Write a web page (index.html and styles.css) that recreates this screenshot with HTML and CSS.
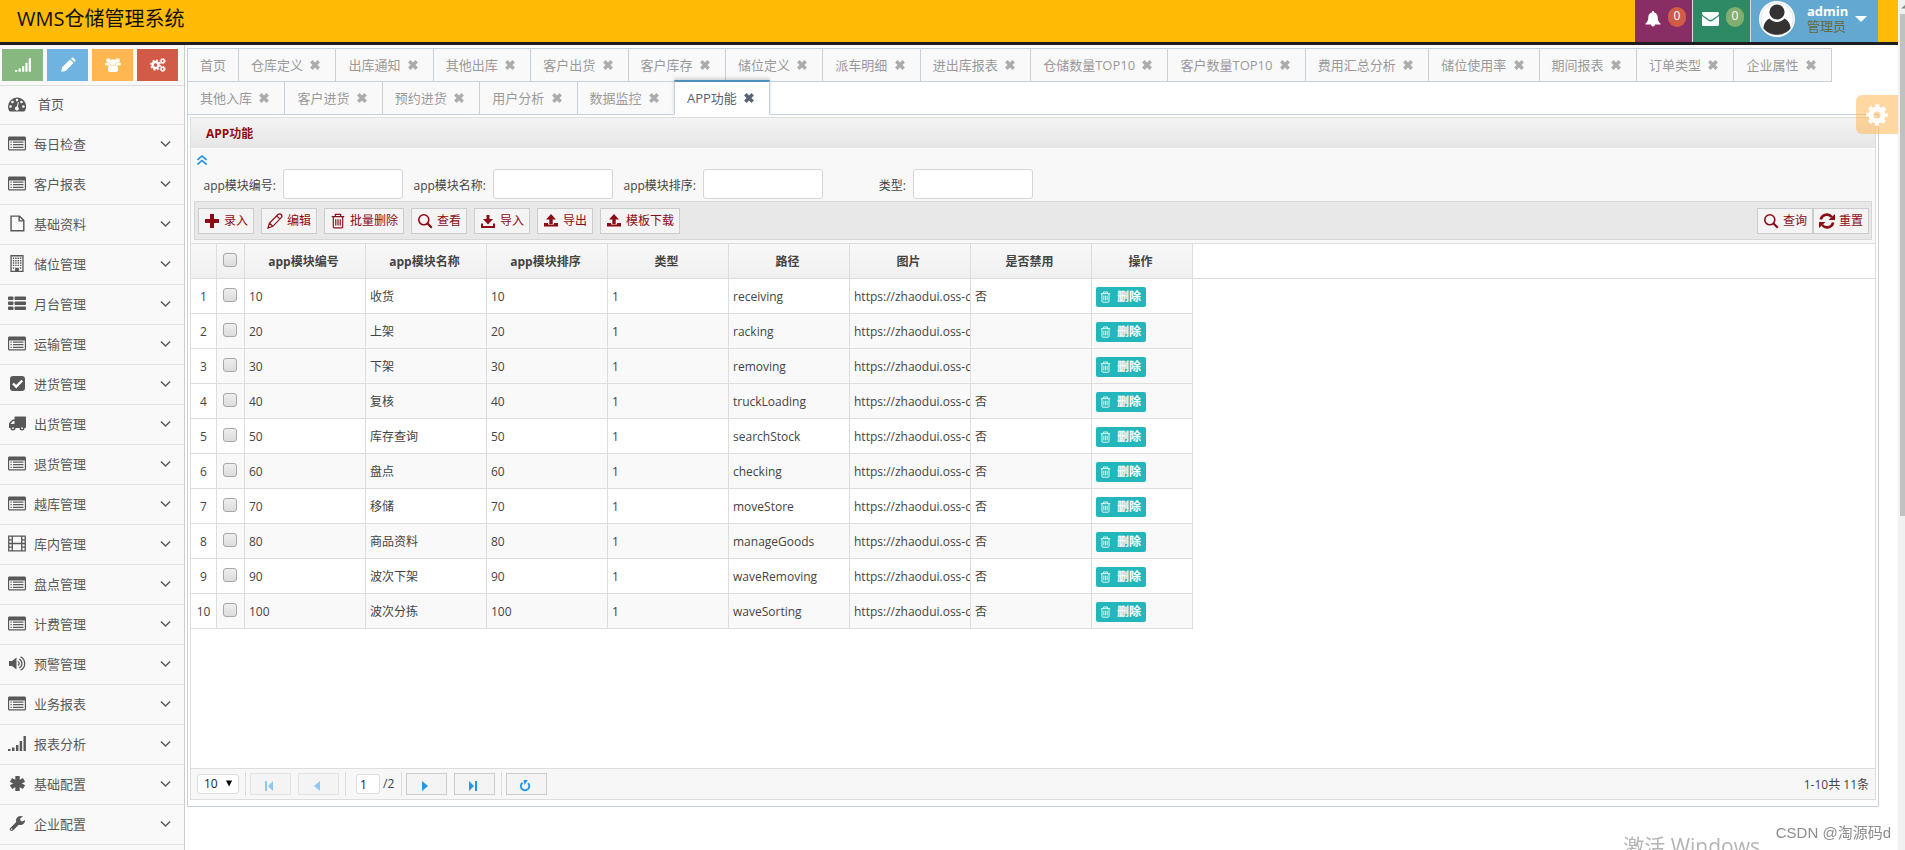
FILE: index.html
```html
<!DOCTYPE html>
<html lang="zh-CN">
<head>
<meta charset="utf-8">
<title>WMS仓储管理系统</title>
<link rel="stylesheet" href="styles.css">
</head>
<body>
<svg class="defs" aria-hidden="true">
  <symbol id="i-dash" viewBox="0 0 18 16"><path fill="currentColor" fill-rule="evenodd" d="M9 1a9 9 0 0 0-9 9c0 1.700.4 3.200 1.200 4.600.2.300.5.400.8.400h14c.3 0 .6-.1.800-.4A9 9 0 0 0 9 1zM2.600 11.300a1.300 1.300 0 1 1 0-2.600 1.300 1.300 0 0 1 0 2.600zM4.500 6.800a1.300 1.300 0 1 1 0-2.600 1.300 1.300 0 0 1 0 2.600zM9 4.900a1.300 1.300 0 1 1 0-2.600 1.300 1.300 0 0 1 0 2.600zm1.800 7.500a2 2 0 1 1-2-2.400l1-3.900c.1-.8 1.200-.5 1 .2l-1 3.900c.7.500 1.100 1.300 1 2.200zM13.500 6.800a1.300 1.300 0 1 1 0-2.600 1.300 1.300 0 0 1 0 2.600zm1.900 4.500a1.300 1.300 0 1 1 0-2.600 1.300 1.300 0 0 1 0 2.600z"/></symbol>
  <symbol id="i-list" viewBox="0 0 18 16"><path fill="currentColor" fill-rule="evenodd" d="M1.500 1h15C17.300 1 18 1.700 18 2.500v11c0 .8-.7 1.500-1.500 1.500h-15C.7 15 0 14.300 0 13.500v-11C0 1.700.7 1 1.500 1zM1.200 5v8.200c0 .3.300.6.600.6h14.400c.3 0 .6-.3.600-.6V5z"/><path fill="currentColor" d="M2.500 6h1.200v1.200H2.500zM2.500 8.600h1.200v1.200H2.500zM2.500 11.200h1.200v1.200H2.500zM5 6h10.500v1.200H5zM5 8.600h10.500v1.200H5zM5 11.200h10.500v1.200H5z"/></symbol>
  <symbol id="i-file" viewBox="0 0 18 18"><path fill="none" stroke="currentColor" stroke-width="1.500" d="M2.700 1.200h9l4.500 4.500v11H2.700zM11.300 1.200v5h5"/></symbol>
  <symbol id="i-building" viewBox="0 0 18 18"><path fill="none" stroke="currentColor" stroke-width="1.400" d="M2.700.8h12.600v16.500H2.700z"/><path stroke="currentColor" stroke-width="1.500" stroke-dasharray="1.500 1" d="M4.600 3.500h9M4.600 6h9M4.600 8.500h9M4.600 11h9"/><path fill="currentColor" d="M4.600 13h1.500v1.500H4.600zM12 13h1.500v1.500H12zM7 13.500h4V17H7z"/></symbol>
  <symbol id="i-thlist" viewBox="0 0 18 16"><path fill="currentColor" d="M1 1h3.500c.5 0 1 .5 1 1v1.500c0 .5-.5 1-1 1H1c-.5 0-1-.5-1-1V2c0-.5.5-1 1-1zM7.500 1H17c.5 0 1 .5 1 1v1.500c0 .5-.5 1-1 1H7.500c-.5 0-1-.5-1-1V2c0-.5.500-1 1-1zM1 6h3.500c.5 0 1 .5 1 1v1.500c0 .5-.5 1-1 1H1c-.5 0-1-.5-1-1V7c0-.5.5-1 1-1zM7.500 6H17c.5 0 1 .5 1 1v1.500c0 .5-.5 1-1 1H7.500c-.5 0-1-.5-1-1V7c0-.5.500-1 1-1zM1 11h3.500c.5 0 1 .5 1 1v1.500c0 .5-.5 1-1 1H1c-.5 0-1-.5-1-1V12c0-.5.5-1 1-1zM7.500 11H17c.5 0 1 .5 1 1v1.500c0 .5-.5 1-1 1H7.500c-.5 0-1-.5-1-1V12c0-.5.500-1 1-1z"/></symbol>
  <symbol id="i-check" viewBox="0 0 18 16"><rect x="2" y=".5" width="15" height="15" rx="3" fill="currentColor"/><path fill="none" stroke="#fff" stroke-width="2.400" d="M5 8l3.200 3.200 6-6.200"/></symbol>
  <symbol id="i-truck" viewBox="0 0 18 16"><path fill="currentColor" fill-rule="evenodd" d="M7.500 1H17c.6 0 1 .4 1 1v9.500c0 .6-.4 1-1 1h-.5a2.500 2.500 0 0 1-5 0h-4a2.500 2.500 0 0 1-5 0H1V8.500l.4-1.300L4 4.500 5 4h1.500V2c0-.6.400-1 1-1zM2.500 8.500h4v-3H5z"/><circle cx="5" cy="12.700" r="1.900" fill="currentColor"/><circle cx="5" cy="12.700" r=".9" fill="#f9f9f9"/><circle cx="14" cy="12.700" r="1.900" fill="currentColor"/><circle cx="14" cy="12.700" r=".9" fill="#f9f9f9"/></symbol>
  <symbol id="i-film" viewBox="0 0 19 17"><path fill="none" stroke="currentColor" stroke-width="1.400" d="M.8.800h17.400v15.400H.8zM4.500.800v15.400M14.500.800v15.400M4.500 8.500h10M.8 4.600h3.700M.8 8.500h3.700M.8 12.400h3.700M14.500 4.600h3.700M14.500 8.500h3.700M14.500 12.400h3.700"/></symbol>
  <symbol id="i-volume" viewBox="0 0 18 16"><path fill="currentColor" d="M1 5.500h3L8.500 2v12L4 10.500H1z"/><path fill="none" stroke="currentColor" stroke-width="1.300" d="M10 6a2.300 2.300 0 0 1 0 4M11.300 3.600a5 5 0 0 1 0 8.800M12.600 1.200a7.700 7.700 0 0 1 0 13.600"/></symbol>
  <symbol id="i-signal" viewBox="0 0 18 16"><path fill="currentColor" d="M0 13.500h2.500v2H0zM4 12h2.500v3.500H4zM8 9.500h2.400v6H8zM11.700 5.500h2.400v10h-2.400zM15.500.500h2.400v15h-2.400z"/></symbol>
  <symbol id="i-asterisk" viewBox="0 0 18 16"><path fill="none" stroke="currentColor" stroke-width="4.400" stroke-linejoin="round" d="M9.500.5v15M3 4.300l13 7.400M3 11.700l13-7.400"/></symbol>
  <symbol id="i-wrench" viewBox="0 0 18 18"><path fill="currentColor" fill-rule="evenodd" d="M12.800 1c1 0 1.900.2 2.700.7L12.500 3.500v2.300l2 1.200 3-1.800c.2 3-2 5.300-4.800 5.300-.6 0-1.200-.1-1.700-.3l-6.300 6.300c-.8.700-2 .7-2.800 0-.8-.8-.8-2 0-2.800L8.200 7.400C7.200 4.200 9.500 1 12.800 1zM3.300 14.200a.8.800 0 1 0 0 1.600.8.800 0 0 0 0-1.600z"/></symbol>
  <symbol id="i-pencil" viewBox="0 0 16 16"><path fill="currentColor" d="M2 10.500L10 2.500l3.500 3.500-8 8-4.200.7zM11 1.700l.9-.9c.5-.5 1-.5 1.500 0l1.900 1.900c.5.500.5 1 0 1.500l-.9.900z"/></symbol>
  <symbol id="i-users" viewBox="0 0 18 16"><g fill="currentColor"><circle cx="3.800" cy="3" r="2.500"/><circle cx="14.200" cy="3" r="2.500"/><circle cx="9" cy="5" r="3.400"/><path d="M1.500 5.500h3.700c.1 1.500.7 2.500 1.500 3.200H3c-2 0-3-.7-3-1.800 0-.9.700-1.400 1.500-1.400zM16.500 5.500h-3.700c-.1 1.500-.7 2.500-1.500 3.200H15c2 0 3-.7 3-1.800 0-.9-.7-1.400-1.500-1.400zM5 8.500h8c1.200.8 1.800 2.500 1.800 4.800 0 1.500-1 2.500-2.500 2.500H5.700c-1.500 0-2.500-1-2.500-2.500 0-2.300.6-4 1.800-4.800z"/></g></symbol>
  <symbol id="i-cogs" viewBox="0 0 18 16"><g fill="none" stroke="currentColor"><circle cx="6.200" cy="8" r="3.400" stroke-width="2.600"/><circle cx="6.200" cy="8" r="5.300" stroke-width="1.600" stroke-dasharray="2.200 1.960"/><circle cx="14.300" cy="3.600" r="1.900" stroke-width="1.600"/><circle cx="14.300" cy="3.600" r="2.900" stroke-width="1" stroke-dasharray="1.300 .980"/><circle cx="14.300" cy="12.400" r="1.900" stroke-width="1.600"/><circle cx="14.300" cy="12.400" r="2.900" stroke-width="1" stroke-dasharray="1.300 .980"/></g></symbol>
  <symbol id="i-cog" viewBox="0 0 22 22"><g fill="none" stroke="currentColor"><circle cx="11" cy="11" r="6" stroke-width="5"/><circle cx="11" cy="11" r="9.200" stroke-width="3.200" stroke-dasharray="4 3.225" stroke-dashoffset="2"/></g></symbol>
  <symbol id="i-down" viewBox="0 0 12 8"><path fill="none" stroke="currentColor" stroke-width="1.600" d="M1 1.200l5 5 5-5"/></symbol>
  <symbol id="i-x" viewBox="0 0 10 10"><path fill="none" stroke="currentColor" stroke-width="3.400" d="M1.300 1.300l7.400 7.400M8.700 1.300L1.300 8.700"/></symbol>
  <symbol id="i-bell" viewBox="0 0 16 16"><path fill="currentColor" d="M8 0c.7 0 1 .4 1 1v.5c2.400.5 3.700 2.300 3.700 4.800 0 3.200 1 5 2.800 6.200v1H10a2 2 0 0 1-4 0H.5v-1c1.800-1.200 2.800-3 2.800-6.200 0-2.500 1.300-4.300 3.700-4.800V1c0-.6.300-1 1-1z"/></symbol>
  <symbol id="i-mail" viewBox="0 0 17 14"><path fill="currentColor" d="M1.500 0h14c.8 0 1.500.6 1.500 1.300 0 .9-.7 1.800-1.500 2.400L10 7.600c-.9.600-2.100.6-3 0L1.500 3.700C.7 3.100 0 2.200 0 1.300 0 .6.700 0 1.500 0zM0 4l6.500 4.700c1.200.9 2.800.9 4 0L17 4v8.500c0 .8-.7 1.500-1.500 1.500h-14C.7 14 0 13.300 0 12.500z"/></symbol>
  <symbol id="i-plus" viewBox="0 0 16 16"><path fill="currentColor" d="M6 1h4v5h5v4h-5v5H6v-5H1V6h5z"/></symbol>
  <symbol id="i-edit" viewBox="0 0 16 16"><path fill="none" stroke="currentColor" stroke-width="1.200" d="M1 15l1.500-5L11 1.500c1-1 2.500-.8 3.200 0s1 2.200 0 3.200L5.800 13.300zM9.700 2.800l3.300 3.300M2.500 10l3.300 3.300"/></symbol>
  <symbol id="i-trash" viewBox="0 0 16 18"><path fill="none" stroke="currentColor" stroke-width="1.300" d="M1 4h14M5 4V1.500h6V4M2.700 4v11.500c0 .8.500 1.300 1.300 1.300h8c.8 0 1.300-.5 1.300-1.300V4M5.500 7v7M8 7v7M10.500 7v7"/></symbol>
  <symbol id="i-search" viewBox="0 0 16 16"><circle cx="6.800" cy="6.800" r="5" fill="none" stroke="currentColor" stroke-width="1.600"/><path stroke="currentColor" stroke-width="2.200" d="M10.300 10.300l4.500 4.500"/></symbol>
  <symbol id="i-import" viewBox="0 0 16 16"><path fill="currentColor" d="M6.500 2h3v4H13L8 11.500 3 6h3.500zM1 10.500h2V13h10v-2.500h2V15H1z"/></symbol>
  <symbol id="i-export" viewBox="0 0 16 16"><path fill="currentColor" d="M8 1l5 5.500H9.700V11H6.300V6.500H3zM1 10h4v1.500h6V10h4v3.500H1z"/></symbol>
  <symbol id="i-refresh" viewBox="0 0 16 16"><path fill="none" stroke="currentColor" stroke-width="2.600" d="M1.800 6.500a6.300 6.300 0 0 1 11-2.500M14.200 9.500a6.300 6.300 0 0 1-11 2.500"/><path fill="currentColor" d="M16 1v6h-6.500zM0 15V9h6.500z"/></symbol>
  <symbol id="i-up2" viewBox="0 0 10 10"><path fill="none" stroke="currentColor" stroke-width="1.600" d="M.5 5L5 1l4.500 4M.5 9.500L5 5.500l4.500 4"/></symbol>
  <symbol id="i-first" viewBox="0 0 10 10"><path fill="currentColor" d="M1 0h2v10H1zM9 0v10L4 5z"/></symbol>
  <symbol id="i-prev" viewBox="0 0 10 10"><path fill="currentColor" d="M8 0v10L2 5z"/></symbol>
  <symbol id="i-next" viewBox="0 0 10 10"><path fill="currentColor" d="M2 0v10l6-5z"/></symbol>
  <symbol id="i-last" viewBox="0 0 10 10"><path fill="currentColor" d="M7 0h2v10H7zM1 0v10l5-5z"/></symbol>
  <symbol id="i-reload" viewBox="0 0 12 12"><path fill="none" stroke="currentColor" stroke-width="1.900" d="M3.500 2.800a4.200 4.200 0 1 0 5.500.3"/><path fill="currentColor" d="M4.500 0h4.300L5.500 5z"/></symbol>
</svg>

<header class="topbar">
  <h1 class="brand">WMS仓储管理系统</h1>
  <nav class="user-nav">
    <a href="#" class="nav-cell purple" aria-label="通知"><svg class="ic16"><use href="#i-bell"/></svg><span class="badge red">0</span></a>
    <a href="#" class="nav-cell green" aria-label="消息"><svg class="mail"><use href="#i-mail"/></svg><span class="badge lime">0</span></a>
    <a href="#" class="nav-cell blue">
      <svg class="avatar" viewBox="0 0 36 36"><circle cx="18" cy="18" r="18" fill="#fff"/><circle cx="18" cy="18" r="16.300" fill="none" stroke="#dfe5e8"/><circle cx="18" cy="11" r="7.600" fill="#333"/><path fill="#333" d="M10.500 17.500c3.500 4.600 11.500 4.600 15 0 3.500 1.500 6 5.500 6 10-3 3.800-8 6.300-13.500 6.300S7.500 31.300 4.500 27.500c0-4.500 2.500-8.500 6-10z"/></svg>
      <span class="who"><strong>admin</strong><span>管理员</span></span>
      <svg class="caret" viewBox="0 0 12 6"><path fill="#fff" d="M0 0h12L6 6z"/></svg>
    </a>
  </nav>
</header>

<div class="layout">
  <aside class="sidebar">
    <div class="shortcuts">
      <button class="sc sc-green" aria-label="统计"><svg class="ic16"><use href="#i-signal"/></svg></button>
      <button class="sc sc-blue" aria-label="编辑"><svg class="ic16"><use href="#i-pencil"/></svg></button>
      <button class="sc sc-orange" aria-label="用户"><svg class="ic16"><use href="#i-users"/></svg></button>
      <button class="sc sc-red" aria-label="设置"><svg class="ic16"><use href="#i-cogs"/></svg></button>
    </div>
    <ul class="menu">
      <li><a href="#" class="home"><svg class="mi"><use href="#i-dash"/></svg><span>首页</span></a></li>
      <li><a href="#"><svg class="mi"><use href="#i-list"/></svg><span>每日检查</span><svg class="dn"><use href="#i-down"/></svg></a></li>
      <li><a href="#"><svg class="mi"><use href="#i-list"/></svg><span>客户报表</span><svg class="dn"><use href="#i-down"/></svg></a></li>
      <li><a href="#"><svg class="mi"><use href="#i-file"/></svg><span>基础资料</span><svg class="dn"><use href="#i-down"/></svg></a></li>
      <li><a href="#"><svg class="mi"><use href="#i-building"/></svg><span>储位管理</span><svg class="dn"><use href="#i-down"/></svg></a></li>
      <li><a href="#"><svg class="mi"><use href="#i-thlist"/></svg><span>月台管理</span><svg class="dn"><use href="#i-down"/></svg></a></li>
      <li><a href="#"><svg class="mi"><use href="#i-list"/></svg><span>运输管理</span><svg class="dn"><use href="#i-down"/></svg></a></li>
      <li><a href="#"><svg class="mi"><use href="#i-check"/></svg><span>进货管理</span><svg class="dn"><use href="#i-down"/></svg></a></li>
      <li><a href="#"><svg class="mi"><use href="#i-truck"/></svg><span>出货管理</span><svg class="dn"><use href="#i-down"/></svg></a></li>
      <li><a href="#"><svg class="mi"><use href="#i-list"/></svg><span>退货管理</span><svg class="dn"><use href="#i-down"/></svg></a></li>
      <li><a href="#"><svg class="mi"><use href="#i-list"/></svg><span>越库管理</span><svg class="dn"><use href="#i-down"/></svg></a></li>
      <li><a href="#"><svg class="mi"><use href="#i-film"/></svg><span>库内管理</span><svg class="dn"><use href="#i-down"/></svg></a></li>
      <li><a href="#"><svg class="mi"><use href="#i-list"/></svg><span>盘点管理</span><svg class="dn"><use href="#i-down"/></svg></a></li>
      <li><a href="#"><svg class="mi"><use href="#i-list"/></svg><span>计费管理</span><svg class="dn"><use href="#i-down"/></svg></a></li>
      <li><a href="#"><svg class="mi"><use href="#i-volume"/></svg><span>预警管理</span><svg class="dn"><use href="#i-down"/></svg></a></li>
      <li><a href="#"><svg class="mi"><use href="#i-list"/></svg><span>业务报表</span><svg class="dn"><use href="#i-down"/></svg></a></li>
      <li><a href="#"><svg class="mi"><use href="#i-signal"/></svg><span>报表分析</span><svg class="dn"><use href="#i-down"/></svg></a></li>
      <li><a href="#"><svg class="mi"><use href="#i-asterisk"/></svg><span>基础配置</span><svg class="dn"><use href="#i-down"/></svg></a></li>
      <li><a href="#"><svg class="mi"><use href="#i-wrench"/></svg><span>企业配置</span><svg class="dn"><use href="#i-down"/></svg></a></li>
    </ul>
  </aside>

  <main class="content">
    <ul class="tabs">
      <li class="plain"><a href="#">首页</a></li>
      <li><a href="#">仓库定义 </a><button aria-label="关闭"><svg><use href="#i-x"/></svg></button></li>
      <li><a href="#">出库通知 </a><button aria-label="关闭"><svg><use href="#i-x"/></svg></button></li>
      <li><a href="#">其他出库 </a><button aria-label="关闭"><svg><use href="#i-x"/></svg></button></li>
      <li><a href="#">客户出货 </a><button aria-label="关闭"><svg><use href="#i-x"/></svg></button></li>
      <li><a href="#">客户库存 </a><button aria-label="关闭"><svg><use href="#i-x"/></svg></button></li>
      <li><a href="#">储位定义 </a><button aria-label="关闭"><svg><use href="#i-x"/></svg></button></li>
      <li><a href="#">派车明细 </a><button aria-label="关闭"><svg><use href="#i-x"/></svg></button></li>
      <li><a href="#">进出库报表 </a><button aria-label="关闭"><svg><use href="#i-x"/></svg></button></li>
      <li><a href="#">仓储数量TOP10 </a><button aria-label="关闭"><svg><use href="#i-x"/></svg></button></li>
      <li><a href="#">客户数量TOP10 </a><button aria-label="关闭"><svg><use href="#i-x"/></svg></button></li>
      <li><a href="#">费用汇总分析 </a><button aria-label="关闭"><svg><use href="#i-x"/></svg></button></li>
      <li><a href="#">储位使用率 </a><button aria-label="关闭"><svg><use href="#i-x"/></svg></button></li>
      <li><a href="#">期间报表 </a><button aria-label="关闭"><svg><use href="#i-x"/></svg></button></li>
      <li><a href="#">订单类型 </a><button aria-label="关闭"><svg><use href="#i-x"/></svg></button></li>
      <li><a href="#">企业属性 </a><button aria-label="关闭"><svg><use href="#i-x"/></svg></button></li>
      <li><a href="#">其他入库 </a><button aria-label="关闭"><svg><use href="#i-x"/></svg></button></li>
      <li><a href="#">客户进货 </a><button aria-label="关闭"><svg><use href="#i-x"/></svg></button></li>
      <li><a href="#">预约进货 </a><button aria-label="关闭"><svg><use href="#i-x"/></svg></button></li>
      <li><a href="#">用户分析 </a><button aria-label="关闭"><svg><use href="#i-x"/></svg></button></li>
      <li><a href="#">数据监控 </a><button aria-label="关闭"><svg><use href="#i-x"/></svg></button></li>
      <li class="active"><a href="#">APP功能 </a><button aria-label="关闭"><svg><use href="#i-x"/></svg></button></li>
    </ul>
    <div class="tab-pane">
      <section class="panel">
        <h2 class="panel-title">APP功能</h2>
        <div class="search">
          <button class="fold" aria-label="收起"><svg><use href="#i-up2"/></svg></button>
          <form class="fields">
            <label for="f1">app模块编号:</label><input id="f1" type="text">
            <label for="f2">app模块名称:</label><input id="f2" type="text">
            <label for="f3">app模块排序:</label><input id="f3" type="text">
            <label for="f4">类型:</label><input id="f4" type="text">
          </form>
          <div class="toolbar">
            <button class="tb"><svg><use href="#i-plus"/></svg>录入</button>
            <button class="tb"><svg><use href="#i-edit"/></svg>编辑</button>
            <button class="tb"><svg><use href="#i-trash"/></svg>批量删除</button>
            <button class="tb"><svg><use href="#i-search"/></svg>查看</button>
            <button class="tb"><svg><use href="#i-import"/></svg>导入</button>
            <button class="tb"><svg><use href="#i-export"/></svg>导出</button>
            <button class="tb"><svg><use href="#i-export"/></svg>模板下载</button>
            <div class="right"><button class="tb"><svg><use href="#i-search"/></svg>查询</button><button class="tb"><svg><use href="#i-refresh"/></svg>重置</button></div>
          </div>
        </div>
        <div class="grid">
          <table>
            <colgroup><col class="c-num"><col class="c-box"><col><col><col><col><col><col><col><col class="c-op"><col class="c-rest"></colgroup>
            <thead><tr><th></th><th><input type="checkbox" aria-label="全选"></th><th>app模块编号</th><th>app模块名称</th><th>app模块排序</th><th>类型</th><th>路径</th><th>图片</th><th>是否禁用</th><th>操作</th><td class="rest"></td></tr></thead>
            <tbody>
              <tr><td>1</td><td><input type="checkbox" aria-label="选择1"></td><td>10</td><td>收货</td><td>10</td><td>1</td><td>receiving</td><td>https://zhaodui.oss-cn</td><td>否</td><td><button class="del"><svg><use href="#i-trash"/></svg>删除</button></td></tr>
              <tr><td>2</td><td><input type="checkbox" aria-label="选择2"></td><td>20</td><td>上架</td><td>20</td><td>1</td><td>racking</td><td>https://zhaodui.oss-cn</td><td></td><td><button class="del"><svg><use href="#i-trash"/></svg>删除</button></td></tr>
              <tr class="hover"><td>3</td><td><input type="checkbox" aria-label="选择3"></td><td>30</td><td>下架</td><td>30</td><td>1</td><td>removing</td><td>https://zhaodui.oss-cn</td><td></td><td><button class="del"><svg><use href="#i-trash"/></svg>删除</button></td></tr>
              <tr><td>4</td><td><input type="checkbox" aria-label="选择4"></td><td>40</td><td>复核</td><td>40</td><td>1</td><td>truckLoading</td><td>https://zhaodui.oss-cn</td><td>否</td><td><button class="del"><svg><use href="#i-trash"/></svg>删除</button></td></tr>
              <tr><td>5</td><td><input type="checkbox" aria-label="选择5"></td><td>50</td><td>库存查询</td><td>50</td><td>1</td><td>searchStock</td><td>https://zhaodui.oss-cn</td><td>否</td><td><button class="del"><svg><use href="#i-trash"/></svg>删除</button></td></tr>
              <tr><td>6</td><td><input type="checkbox" aria-label="选择6"></td><td>60</td><td>盘点</td><td>60</td><td>1</td><td>checking</td><td>https://zhaodui.oss-cn</td><td>否</td><td><button class="del"><svg><use href="#i-trash"/></svg>删除</button></td></tr>
              <tr><td>7</td><td><input type="checkbox" aria-label="选择7"></td><td>70</td><td>移储</td><td>70</td><td>1</td><td>moveStore</td><td>https://zhaodui.oss-cn</td><td>否</td><td><button class="del"><svg><use href="#i-trash"/></svg>删除</button></td></tr>
              <tr><td>8</td><td><input type="checkbox" aria-label="选择8"></td><td>80</td><td>商品资料</td><td>80</td><td>1</td><td>manageGoods</td><td>https://zhaodui.oss-cn</td><td>否</td><td><button class="del"><svg><use href="#i-trash"/></svg>删除</button></td></tr>
              <tr><td>9</td><td><input type="checkbox" aria-label="选择9"></td><td>90</td><td>波次下架</td><td>90</td><td>1</td><td>waveRemoving</td><td>https://zhaodui.oss-cn</td><td>否</td><td><button class="del"><svg><use href="#i-trash"/></svg>删除</button></td></tr>
              <tr><td>10</td><td><input type="checkbox" aria-label="选择10"></td><td>100</td><td>波次分拣</td><td>100</td><td>1</td><td>waveSorting</td><td>https://zhaodui.oss-cn</td><td>否</td><td><button class="del"><svg><use href="#i-trash"/></svg>删除</button></td></tr>
            </tbody>
          </table>
        </div>
        <footer class="pager">
          <span class="size"><select aria-label="每页条数"><option>10</option><option>20</option></select><svg viewBox="0 0 8 7"><path d="M0 0h7L3.500 7z"/></svg></span>
          <span class="sep"></span>
          <button class="pg" disabled aria-label="首页"><svg><use href="#i-first"/></svg></button>
          <button class="pg" disabled aria-label="上一页"><svg><use href="#i-prev"/></svg></button>
          <span class="sep"></span>
          <label class="page-no"><input type="text" value="1" aria-label="页码">/2</label>
          <span class="sep"></span>
          <button class="pg" aria-label="下一页"><svg><use href="#i-next"/></svg></button>
          <button class="pg" aria-label="末页"><svg><use href="#i-last"/></svg></button>
          <span class="sep"></span>
          <button class="pg" aria-label="刷新"><svg class="reload"><use href="#i-reload"/></svg></button>
          <span class="total">1-10共 11条</span>
        </footer>
      </section>
    </div>
  </main>
</div>

<button class="settings" aria-label="设置"><svg><use href="#i-cog"/></svg></button>
<div class="scrollbar"><svg viewBox="0 0 7 14"><path fill="#8a8a8a" d="M3 8.500h4V5z"/></svg><span></span></div>
<div class="activate">激活 Windows</div>
<div class="credit">CSDN @淘源码d</div>
</body>
</html>
```

FILE: styles.css
```css
* { box-sizing: border-box; }
html { height: 100%; overflow: hidden; }
body {
  margin: 0;
  padding-right: 7px;
  height: 100%;
  overflow: hidden;
  display: flex;
  flex-direction: column;
  background: #fff;
  color: #444;
  font: 12px/16px "Open Sans", "Noto Sans CJK SC", sans-serif;
}
button, input, select { font: inherit; color: inherit; margin: 0; }
button { cursor: pointer; padding: 0; }
a { color: inherit; text-decoration: none; }
ul { list-style: none; margin: 0; padding: 0; }
svg { display: block; flex: none; }
.defs { position: absolute; width: 0; height: 0; }
.ic16 { width: 16px; height: 16px; }

/* top bar */
.topbar {
  flex: none;
  display: flex;
  justify-content: space-between;
  height: 45px;
  background: #ffbb05;
  border-bottom: 3px solid #1f1c22;
  padding: 0 20px 0 17px;
}
.brand { margin: 0; font-size: 20px; font-weight: 400; line-height: 38px; color: #111; }
.user-nav { display: flex; }
.nav-cell { display: flex; align-items: center; color: #fff; border-left: 1px solid #ddd; padding: 0 6px 4px 9px; gap: 7px; }
.purple { background: #892e65; border-left-color: #892e65; }
.green { background: #2e8965; }
.blue { background: #62a8d1; padding: 0 11px 4px 8px; gap: 0; }
.mail { width: 17px; height: 14px; }
.badge { width: 18px; height: 20px; margin-bottom: 4px; border-radius: 9px; text-align: center; line-height: 18px; font-size: 12px; }
.red { background: #d15b47; }
.lime { background: #82af6f; }
.avatar { width: 36px; height: 36px; }
.who { display: flex; flex-direction: column; font-size: 13px; line-height: 15px; width: 39px; margin-left: 12px; }
.who span { color: #6b6a3d; }
.caret { width: 12px; height: 6px; margin-left: 9px; }

/* sidebar */
.layout { flex: 1; display: flex; min-height: 0; }
.sidebar { flex: none; width: 185px; background: #f9f9f9; border-right: 1px solid #ccc; }
.shortcuts { display: flex; gap: 4px; padding: 4px 6px 4px 2px; height: 41px; border-bottom: 1px solid #ddd; }
.sc { flex: 1; height: 32px; border: 0; color: #fff; display: flex; align-items: center; justify-content: center; }
.sc-green { background: #87b87f; }
.sc-blue { background: #6fb3e0; }
.sc-orange { background: #ffb752; }
.sc-red { background: #d15b47; }
.menu a {
  display: flex;
  align-items: center;
  height: 40px;
  padding: 0 13px 2px 8px;
  border-bottom: 1px solid #e5e5e5;
  font-size: 13px;
  color: #585858;
}
.menu .home { height: 39px; }
.menu .home span { margin-left: 12px; }
.mi { width: 18px; height: 17px; }
.menu span { flex: 1; margin-left: 8px; }
.dn { width: 11px; height: 8px; }

/* tabs */
.content { flex: 1; min-width: 0; padding: 3px 19px 0 2px; }
.tabs { display: flex; flex-wrap: wrap; padding-left: 1px; }
.tabs li {
  display: flex;
  align-items: center;
  height: 34px;
  margin: 0 0 -1px -1px;
  padding: 0 15px 0 12px;
  border: 1px solid #c5d0dc;
  background: #f9f9f9;
  color: #999;
  font-size: 13px;
  white-space: pre;
}
.tabs .plain { padding-right: 12px; }
.tabs li button { border: 0; background: none; margin-left: 4px; opacity: .8; }
.tabs li svg { width: 10px; height: 10px; }
.tabs .active { height: 35px; margin-top: -1px; background: #fff; color: #576373; border-top: 2px solid #4c8fbd; border-bottom-color: #fff; box-shadow: 0 -2px 3px rgba(0, 0, 0, .15); z-index: 1; }
.tabs .active button { opacity: 1; }
.tab-pane { border: 1px solid #c5d0dc; padding: 2px 2px 6px; }

/* panel */
.panel { border: 1px solid #ddd; display: flex; flex-direction: column; }
.panel-title {
  margin: 0;
  height: 31px;
  padding: 1px 15px 0;
  line-height: 30px;
  font-size: 12px;
  color: #8d0b14;
  background: linear-gradient(#f4f4f4, #e6e6e6);
  border-bottom: 1px solid #fff;
}
.search { background: #f8f8f8; padding: 6px 3px 3px; }
.fold { display: block; margin-left: 3px; border: 0; background: none; color: #1e8fe1; }
.fold svg { width: 10px; height: 10px; }
.fields { display: grid; grid-template-columns: 73px 120px repeat(3, 76px 120px); column-gap: 7px; align-items: center; padding: 4px 0 2px 9px; }
.fields label { padding-top: 4px; text-align: right; white-space: nowrap; }
.fields input { width: 120px; height: 30px; border: 1px solid #d5d5d5; border-radius: 3px; background: #fff; padding: 0 6px; }
.toolbar { display: flex; align-items: center; gap: 7px; height: 39px; padding: 0 2px 0 3px; background: #e8e8e8; border: 1px solid #d6d6d6; }
.tb {
  display: flex;
  align-items: center;
  gap: 4px;
  height: 26px;
  padding: 1px 5px 0;
  border: 1px solid #ccc;
  background: #f4f4f4;
  color: #8d0b14;
  white-space: nowrap;
}
.tb svg { width: 16px; height: 16px; }
.right { display: flex; margin-left: auto; }

/* table */
.grid { border-top: 1px solid #ddd; height: 525px; overflow: hidden; }
table { width: 100%; table-layout: fixed; border-collapse: separate; border-spacing: 0; }
col { width: 121px; }
.c-num { width: 26px; }
.c-box { width: 28px; }
.c-op { width: 101px; }
.c-rest { width: auto; }
th, td { height: 35px; padding: 1px 4px 0; border-right: 1px solid #ddd; border-bottom: 1px solid #ddd; overflow: hidden; white-space: nowrap; text-align: left; }
th { text-align: center; padding: 1px 3px 0 0; background: linear-gradient(#f8f8f8, #f0f0f0); }
td:first-child { text-align: center; padding: 1px 0 0; }
td:nth-child(2), th:nth-child(2) { padding: 0 1px 0 0; }
thead .rest { border-right: 0; }
tbody tr:nth-child(even), tbody .hover { background: #f9f9f9; }
tbody td:first-child { background: #fff; }
input[type="checkbox"] {
  appearance: none;
  display: block;
  width: 14px;
  height: 14px;
  margin: -3px auto 0;
  border: 1px solid #a8a8a8;
  border-radius: 3px;
  background: linear-gradient(#eee, #dcdcdc);
}
.del {
  display: flex;
  align-items: center;
  gap: 6px;
  height: 20px;
  padding: 0 5px 0 4px;
  border: 0;
  border-radius: 2px;
  background: #23b7bb;
  color: #fff;
  font-weight: 700;
}
.del svg { width: 11px; height: 12px; }

/* pager */
.pager { display: flex; align-items: center; gap: 4px; height: 31px; padding: 0 6px; background: #f7f7f7; border-top: 1px solid #ddd; }
.size { position: relative; }
.size select { display: block; appearance: none; width: 42px; height: 20px; padding: 0 6px; border: 1px solid #ddd; border-radius: 3px; background: #fff; color: #222; }
.size svg { position: absolute; right: 6px; top: 6px; width: 7px; height: 7px; pointer-events: none; }
.sep { width: 1px; height: 24px; background: #ddd; margin-left: 2px; }
.pg { display: flex; align-items: center; justify-content: center; width: 41px; height: 22px; padding: 3px 4px 0 0; border: 1px solid #ccc; background: #f4f4f4; color: #1e96ea; }
.pg + .pg { margin-left: 3px; }
.pg:disabled { border-color: #e2e2e2; color: #8ccaf4; }
.pg svg { width: 10px; height: 10px; }
.pg .reload { width: 12px; height: 12px; }
.page-no { display: flex; align-items: center; gap: 3px; margin: 0 1px 0 6px; }
.page-no input { width: 24px; height: 20px; padding: 0 3px; border: 1px solid #ddd; border-radius: 3px; background: #fff; color: #222; }
.total { margin-left: auto; padding-top: 2px; }

/* floating layers */
.settings { position: fixed; right: 7px; top: 95px; width: 42px; height: 39px; border: 0; border-radius: 6px 0 0 6px; background: rgba(255, 183, 82, .55); color: #fff; display: flex; align-items: center; justify-content: center; }
.settings svg { width: 22px; height: 22px; }
.scrollbar { position: fixed; right: 0; top: 0; bottom: 0; width: 7px; background: #f1f1f1; }
.scrollbar svg { width: 7px; height: 14px; }
.scrollbar span { display: block; height: 59%; margin-left: 2px; background: #c1c1c1; }
.activate { position: fixed; right: 145px; bottom: -10px; font-size: 21px; line-height: 28px; color: #b4b4b4; }
.credit { position: fixed; right: 14px; bottom: 6px; font: 15px/22px "Liberation Sans", "Noto Sans CJK SC", sans-serif; color: #8c8c8c; }
```
